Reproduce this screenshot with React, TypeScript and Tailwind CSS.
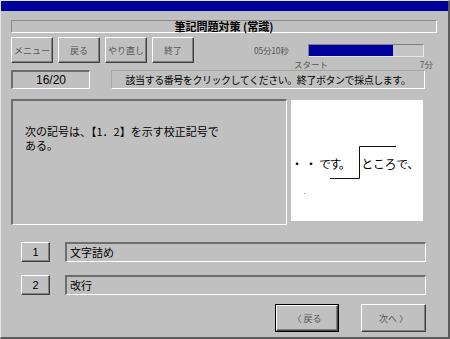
import React from "react";

const font = { fontFamily: '"Noto Sans CJK JP", "Noto Sans", sans-serif' };

const raised =
  "border-t border-l border-t-white border-l-white border-r border-b border-r-[#404040] border-b-[#404040] shadow-[inset_-1px_-1px_0_#808080]";
const sunken =
  "border-t-2 border-l-2 border-t-[#6e6e6e] border-l-[#6e6e6e] border-r border-b border-r-white border-b-white";

function ToolButton({ label }: { label: string }) {
  return (
    <button
      className={`w-[42px] h-[26px] flex items-center justify-center text-[9px] leading-none text-[#555] bg-[#c0c0c0] ${raised}`}
    >
      {label}
    </button>
  );
}

function Answer({ num, text }: { num: string; text: string }) {
  return (
    <div className="flex h-[20px] items-stretch">
      <button
        className={`ml-[10px] w-[29px] flex items-center justify-center text-[11px] leading-none text-black bg-[#c0c0c0] ${raised}`}
        style={{ fontFamily: '"Liberation Sans", sans-serif' }}
      >
        {num}
      </button>
      <div className={`ml-[15px] w-[361px] flex items-center pl-[3px] text-[11px] leading-none text-black ${sunken}`}>
        {text}
      </div>
    </div>
  );
}

export default function App() {
  return (
    <div
      className="w-[450px] h-[339px] bg-[#c0c0c0] flex flex-col border-t border-l border-t-[#e4e4e4] border-l-[#e4e4e4] border-r-2 border-b-2 border-r-[#5a5a5a] border-b-[#5a5a5a] overflow-hidden"
      style={font}
    >
      {/* title bar */}
      <div className="h-[10px] bg-[#00009c] shrink-0" />

      <div className="pl-[10px] flex flex-col">
        {/* heading */}
        <div className="mt-[9px] w-[426px] h-[13px] flex items-center justify-center border-t border-l border-t-[#8a8a8a] border-l-[#8a8a8a] border-r border-b border-r-white border-b-white">
          <span className="text-[11px] leading-none font-bold text-black">筆記問題対策 (常識)</span>
        </div>

        {/* toolbar + timer */}
        <div className="mt-[4px] h-[26px] flex items-start">
          <div className="flex gap-[5px]">
            <ToolButton label="メニュー" />
            <ToolButton label="戻る" />
            <ToolButton label="やり直し" />
            <ToolButton label="終了" />
          </div>
          <div className="ml-[60px] flex flex-col">
            <div className="mt-[7px] flex items-center h-[13px]">
              <span className="w-[35px] text-[8.5px] leading-none text-[#555] tracking-[-0.2px]">05分10秒</span>
              <div className="ml-[19px] w-[116px] h-[13px] border-t border-l border-t-[#808080] border-l-[#808080] border-r border-b border-r-[#e8e8e8] border-b-[#e8e8e8] bg-[#c4c4c4]">
                <div className="h-full w-[84px] bg-[#00009c]" />
              </div>
            </div>
            <div className="mt-[2px] ml-[40px] w-[139px] flex justify-between text-[8.5px] leading-[10px] text-[#555]">
              <span>スタート</span>
              <span>7分</span>
            </div>
          </div>
        </div>

        {/* counter + instruction */}
        <div className="mt-[7px] h-[19px] flex">
          <div
            className={`w-[79px] flex items-center justify-center text-[12px] leading-none text-black ${sunken}`}
            style={{ fontFamily: '"Liberation Sans", sans-serif' }}
          >
            16/20
          </div>
          <div className="ml-[21px] w-[314px] flex items-center justify-center border-t border-l border-t-[#a4a4a4] border-l-[#a4a4a4] border-r border-b border-r-white border-b-white">
            <span className="text-[10px] leading-none text-black tracking-[-0.45px]">
              該当する番号をクリックしてください。終了ボタンで採点します。
            </span>
          </div>
        </div>

        {/* question + picture */}
        <div className="mt-[10px] h-[126px] flex items-start">
          <div className={`w-[276px] h-[126px] pl-[12px] pt-[23px] flex flex-col ${sunken}`}>
            <span className="text-[11px] leading-[14px] text-black">次の記号は、【1．2】を示す校正記号で</span>
            <span className="text-[11px] leading-[14px] text-black">ある。</span>
          </div>
          <div className="ml-[4px] mt-[1px] w-[132px] h-[121px] bg-white relative">
            <div className="absolute left-0 top-[57px] flex items-center text-[12px] leading-[14px] text-black whitespace-nowrap">
              <span className="tracking-[2px]">・・</span>
              <span className="tracking-[-1.5px]">です。</span>
              <span className="ml-[12px] tracking-[-0.4px]">ところで、</span>
            </div>
            <svg className="absolute left-0 top-0" width="132" height="121" viewBox="0 0 132 121">
              <polyline points="39,78.5 68.5,78.5 68.5,46.5 105,46.5" fill="none" stroke="#111" strokeWidth="1" />
              <rect x="13" y="93" width="1" height="1" fill="#999" />
            </svg>
          </div>
        </div>

        {/* answers */}
        <div className="mt-[17px]">
          <Answer num="1" text="文字詰め" />
        </div>
        <div className="mt-[13px]">
          <Answer num="2" text="改行" />
        </div>

        {/* navigation */}
        <div className="mt-[9px] h-[28px] flex">
          <button className="ml-[264px] w-[64px] h-[28px] border border-black bg-[#c0c0c0] flex">
            <span
              className={`flex-1 flex items-center justify-center text-[9px] leading-none text-[#555] ${raised}`}
            >
              〈 戻る
            </span>
          </button>
          <button
            className={`ml-[22px] w-[65px] h-[28px] flex items-center justify-center text-[9px] leading-none text-[#555] bg-[#c0c0c0] ${raised}`}
          >
            次へ 〉
          </button>
        </div>
      </div>
    </div>
  );
}
